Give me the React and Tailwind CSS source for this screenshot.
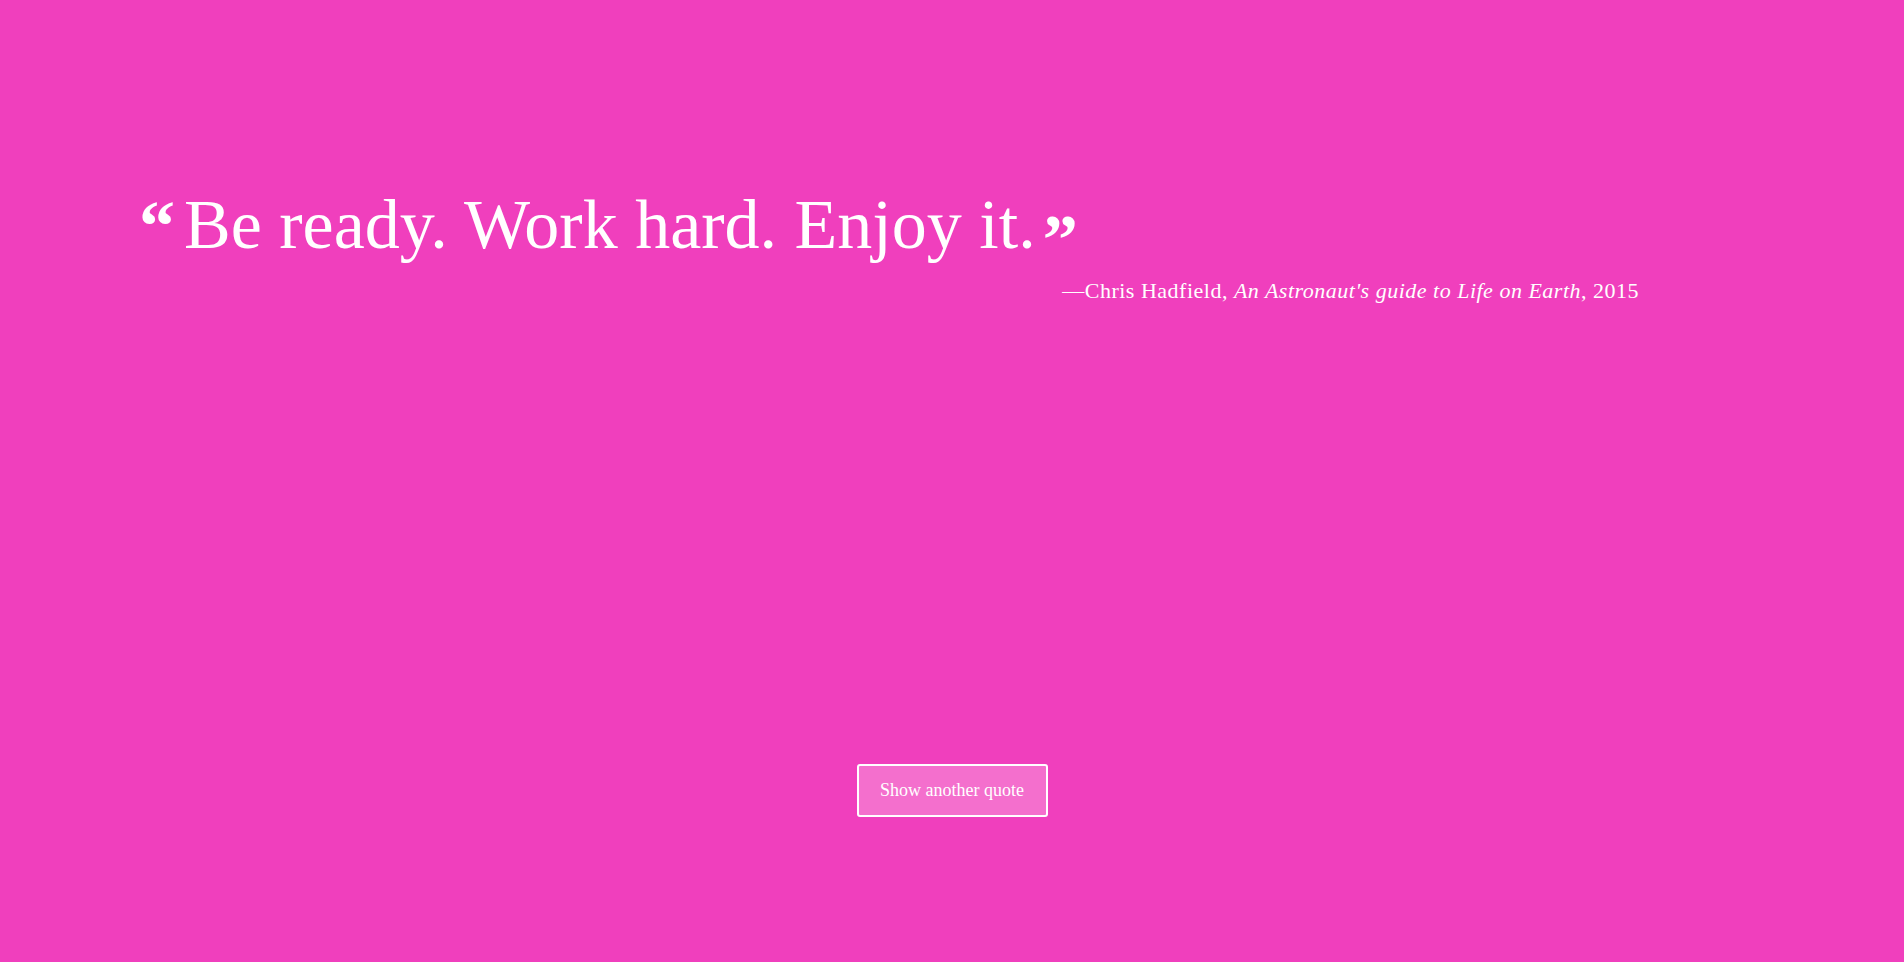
import React from "react";

const quote = {
  text: "Be ready. Work hard. Enjoy it.",
  author: "Chris Hadfield",
  source: "An Astronaut's guide to Life on Earth",
  year: "2015",
};

export default function App() {
  return (
    <div
      className="min-h-screen w-full bg-[#f03fbd] text-white flex flex-col"
      style={{ fontFamily: '"Liberation Serif", "DejaVu Serif", serif' }}
    >
      <div className="pt-[190px] pl-[139px] pr-[265px]">
        <blockquote className="flex items-start h-[70px]">
          <span className="text-[72px] leading-[70px] font-bold mt-[1px] mr-[9px]">“</span>
          <span className="text-[70px] leading-[70px]">{quote.text}</span>
          <span className="relative top-[30px] text-[70px] leading-[40px] font-bold ml-[7px]">”</span>
        </blockquote>
        <p className="text-right text-[22px] tracking-[0.5px] mt-[14px]">
          —{quote.author}, <em>{quote.source}</em>, {quote.year}
        </p>
      </div>
      <div className="flex justify-center mt-[457px]">
        <button className="w-[191px] h-[53px] border-2 border-white rounded-[3px] bg-white/25 text-[18px] text-white">
          Show another quote
        </button>
      </div>
    </div>
  );
}
